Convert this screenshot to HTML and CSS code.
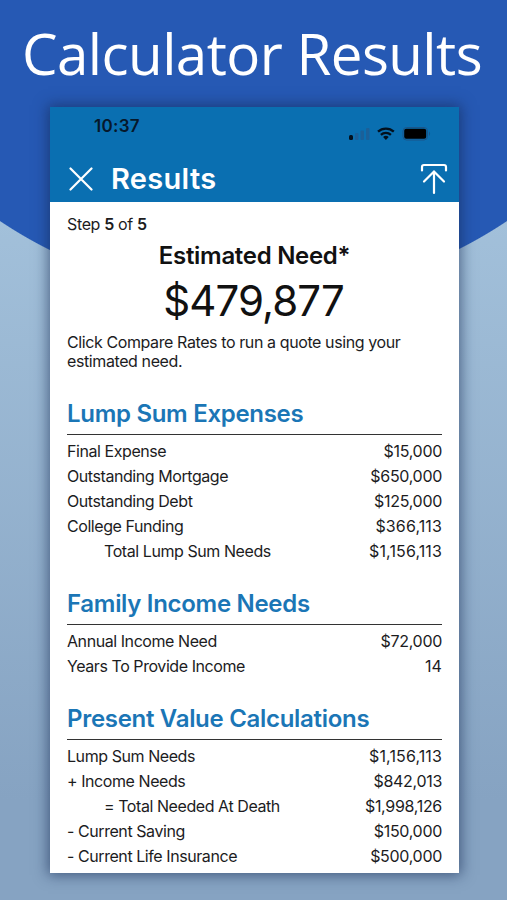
FILE: index.html
```html
<!DOCTYPE html>
<html lang="en">
<head>
<meta charset="utf-8">
<title>Calculator Results</title>
<link rel="stylesheet" href="styles.css">
</head>
<body>
<main class="promo">
  <h1 class="promo-title">Calculator Results</h1>
  <section class="phone">
    <header class="top">
      <div class="status">
        <span class="time">10:37</span>
        <svg class="status-icons" width="84" height="16" viewBox="0 0 84 16">
          <rect x="1" y="9" width="4" height="5" rx="1.500" fill="#03101d"/>
          <g fill="#1b6099"><rect x="7" y="7" width="3.500" height="7" rx="1"/><rect x="12.500" y="4.500" width="3.500" height="9.500" rx="1"/><rect x="18" y="2" width="3.500" height="12" rx="1"/></g>
          <g fill="none" stroke="#03101d" stroke-width="2.300"><path d="M30 5.700a11.500 11.500 0 0 1 15.800 0M32.900 8.900a7.200 7.200 0 0 1 10 0"/></g>
          <path d="M35.100 11.100a4.200 4.200 0 0 1 5.600 0L37.900 14z" fill="#03101d"/>
          <rect x="55" y="1.500" width="24.500" height="12.500" rx="3.500" fill="none" stroke="#1b5589"/>
          <rect x="56.200" y="2.700" width="22" height="10" rx="2" fill="#000"/>
          <path d="M81 5.500q2.200 2.200 0 4.400z" fill="#1b5589"/>
        </svg>
      </div>
      <div class="nav">
        <svg class="close" width="24" height="24" viewBox="0 0 24 24"><path d="M1.500 1.500l21 21M22.500 1.500l-21 21"/></svg>
        <h2 class="nav-title">Results</h2>
        <svg class="upload" width="28" height="32" viewBox="0 0 28 32"><path d="M2 7.500V4q0-2 2-2h20q2 0 2 2v3.500M14 30V8.500M4 18.500l10-10 10 10"/></svg>
      </div>
    </header>
    <div class="content">
      <p class="step">Step <b>5</b> of <b>5</b></p>
      <h2 class="estimate-label">Estimated Need*</h2>
      <p class="estimate">$479,877</p>
      <p class="hint">Click Compare Rates to run a quote using your estimated need.</p>
      <section class="group">
        <h3>Lump Sum Expenses</h3>
        <dl>
          <div class="row"><dt>Final Expense</dt><dd>$15,000</dd></div>
          <div class="row"><dt>Outstanding Mortgage</dt><dd>$650,000</dd></div>
          <div class="row"><dt>Outstanding Debt</dt><dd>$125,000</dd></div>
          <div class="row"><dt>College Funding</dt><dd class="loose">$366,113</dd></div>
          <div class="row total"><dt>Total Lump Sum Needs</dt><dd class="loose">$1,156,113</dd></div>
        </dl>
      </section>
      <section class="group">
        <h3>Family Income Needs</h3>
        <dl>
          <div class="row"><dt>Annual Income Need</dt><dd>$72,000</dd></div>
          <div class="row"><dt>Years To Provide Income</dt><dd class="loose">14</dd></div>
        </dl>
      </section>
      <section class="group last">
        <h3>Present Value Calculations</h3>
        <dl>
          <div class="row"><dt>Lump Sum Needs</dt><dd class="loose">$1,156,113</dd></div>
          <div class="row"><dt>+ Income Needs</dt><dd>$842,013</dd></div>
          <div class="row total"><dt>= Total Needed At Death</dt><dd>$1,998,126</dd></div>
          <div class="row"><dt>- Current Saving</dt><dd>$150,000</dd></div>
          <div class="row"><dt>- Current Life Insurance</dt><dd>$500,000</dd></div>
        </dl>
      </section>
    </div>
  </section>
</main>
</body>
</html>
```
FILE: styles.css
```css
* { box-sizing: border-box; margin: 0; padding: 0; }
body { font-family: Inter, "Liberation Sans", sans-serif; color: #1c1c1e; }
.promo {
  height: 900px;
  overflow: hidden;
  background:
    radial-gradient(circle 456px at 253.5px -158px, #2659b4 455.5px, transparent 456.5px),
    linear-gradient(#a2c0da 220px, #86a3c2 800px);
}
.promo-title {
  height: 107px;
  padding-top: 14px;
  font: 400 56.5px/80px "Open Sans", "Noto Sans", sans-serif;
  letter-spacing: -0.55px;
  text-align: center;
  text-indent: -3px;
  white-space: nowrap;
  color: #fff;
}
.phone {
  width: 409px;
  height: 766px;
  margin-left: 50px;
  background: #fff;
  box-shadow: 0 0 13px 2px rgba(20, 40, 80, .6);
  overflow: hidden;
}
.top { height: 95px; background: #0a6fb1; }
.status { display: flex; justify-content: space-between; height: 48px; padding: 8px 27px 0 44px; }
.time { font-size: 17px; line-height: 22px; font-weight: 600; letter-spacing: .3px; color: #06182b; }
.status-icons { margin-top: 11px; }
.nav { display: flex; align-items: center; height: 48px; padding: 0 11px 0 19px; }
.nav svg { fill: none; stroke: #fff; stroke-width: 2.2; stroke-linecap: round; }
.nav-title { margin-left: 18px; font-size: 29px; line-height: 36px; font-weight: 600; letter-spacing: .3px; color: #fff; }
.upload { margin-left: auto; }
.content { padding: 12px 17px 0; font-size: 16px; line-height: 19px; letter-spacing: -.4px; }
.step { line-height: 20px; letter-spacing: -.35px; }
.step b { font-weight: 600; }
.estimate-label { margin-top: 7px; font-size: 24px; line-height: 30px; font-weight: 600; letter-spacing: -.3px; text-align: center; color: #111; }
.estimate { margin-top: 4px; font-size: 42px; line-height: 52px; letter-spacing: -.9px; text-indent: -2px; text-align: center; color: #111; }
.hint { margin-top: 6px; }
.group { margin-top: 25px; }
.group + .group { margin-top: 21.1px; }
.group + .last { margin-top: 22px; }
.group h3 { height: 39px; padding-top: 2px; border-bottom: 1px solid #333; font-size: 24px; line-height: 32px; font-weight: 600; letter-spacing: -.3px; color: #1b76b6; }
.group dl { padding-top: 4px; }
.row { display: flex; justify-content: space-between; line-height: 25.1px; }
.row dt { letter-spacing: -.43px; }
.row dd { letter-spacing: -.3px; }
.row .loose { letter-spacing: .12px; }
.total dt { padding-left: 37px; }
```
